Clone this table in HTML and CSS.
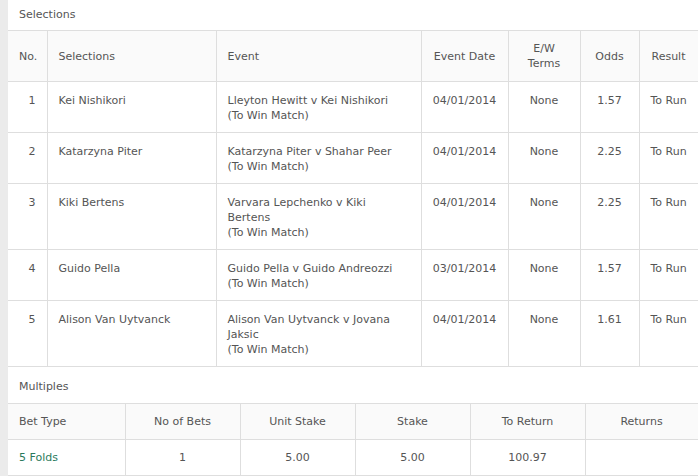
FILE: index.html
```html
<!DOCTYPE html>
<html>
<head>
<meta charset="utf-8">
<link rel="stylesheet" href="styles.css">
</head>
<body>
<div class="panel">
  <div class="section-title">Selections</div>
  <table class="grid selections">
    <colgroup>
      <col class="c-no"><col class="c-sel"><col class="c-ev"><col class="c-date"><col class="c-ew"><col class="c-odds"><col class="c-res">
    </colgroup>
    <thead>
      <tr>
        <th class="right">No.</th>
        <th>Selections</th>
        <th>Event</th>
        <th class="center">Event Date</th>
        <th class="center">E/W<br>Terms</th>
        <th class="center">Odds</th>
        <th class="center">Result</th>
      </tr>
    </thead>
    <tbody>
      <tr>
        <td class="right">1</td>
        <td>Kei Nishikori</td>
        <td>Lleyton Hewitt v Kei Nishikori<br>(To Win Match)</td>
        <td class="center">04/01/2014</td>
        <td class="center">None</td>
        <td class="center">1.57</td>
        <td class="center">To Run</td>
      </tr>
      <tr>
        <td class="right">2</td>
        <td>Katarzyna Piter</td>
        <td>Katarzyna Piter v Shahar Peer<br>(To Win Match)</td>
        <td class="center">04/01/2014</td>
        <td class="center">None</td>
        <td class="center">2.25</td>
        <td class="center">To Run</td>
      </tr>
      <tr>
        <td class="right">3</td>
        <td>Kiki Bertens</td>
        <td>Varvara Lepchenko v Kiki<br>Bertens<br>(To Win Match)</td>
        <td class="center">04/01/2014</td>
        <td class="center">None</td>
        <td class="center">2.25</td>
        <td class="center">To Run</td>
      </tr>
      <tr>
        <td class="right">4</td>
        <td>Guido Pella</td>
        <td>Guido Pella v Guido Andreozzi<br>(To Win Match)</td>
        <td class="center">03/01/2014</td>
        <td class="center">None</td>
        <td class="center">1.57</td>
        <td class="center">To Run</td>
      </tr>
      <tr>
        <td class="right">5</td>
        <td>Alison Van Uytvanck</td>
        <td>Alison Van Uytvanck v Jovana<br>Jaksic<br>(To Win Match)</td>
        <td class="center">04/01/2014</td>
        <td class="center">None</td>
        <td class="center">1.61</td>
        <td class="center">To Run</td>
      </tr>
    </tbody>
  </table>
  <div class="section-title multiples-title">Multiples</div>
  <table class="grid multiples">
    <colgroup>
      <col class="c-m1"><col class="c-m"><col class="c-m"><col class="c-m"><col class="c-m"><col class="c-m6">
    </colgroup>
    <thead>
      <tr>
        <th>Bet Type</th>
        <th class="center">No of Bets</th>
        <th class="center">Unit Stake</th>
        <th class="center">Stake</th>
        <th class="center">To Return</th>
        <th class="center">Returns</th>
      </tr>
    </thead>
    <tbody>
      <tr>
        <td class="bet-type">5 Folds</td>
        <td class="center">1</td>
        <td class="center">5.00</td>
        <td class="center">5.00</td>
        <td class="center">100.97</td>
        <td class="center"></td>
      </tr>
    </tbody>
  </table>
</div>
</body>
</html>
```
FILE: styles.css
```css
html, body {
  margin: 0;
  padding: 0;
}
body {
  background: #ebebeb;
  font-family: "DejaVu Sans", Verdana, sans-serif;
  font-size: 11px;
  line-height: 15px;
  color: #555;
}
.panel {
  margin-left: 8px;
  width: 690px;
  background: #fff;
  min-height: 476px;
}
.section-title {
  padding: 7px 11px 8px;
}
.multiples-title {
  padding: 12px 11px 9px;
}
.grid {
  width: 690px;
  border-collapse: collapse;
  table-layout: fixed;
}
.grid th,
.grid td {
  padding: 10px 11px;
  border: 1px solid #dedede;
  text-align: left;
  font-weight: normal;
  vertical-align: top;
  white-space: nowrap;
}
.selections td {
  padding-top: 11px;
  padding-bottom: 9px;
}
.grid tr > :first-child {
  border-left: none;
}
.grid th {
  background: #fafafa;
  vertical-align: middle;
}
.grid .center {
  text-align: center;
}
.grid .right {
  text-align: right;
}
.c-no { width: 39px; }
.c-sel { width: 169px; }
.c-ev { width: 205px; }
.c-date { width: 87px; }
.c-ew { width: 72px; }
.c-odds { width: 59px; }
.c-res { width: 59px; }
.c-m1 { width: 117px; }
.c-m { width: 115px; }
.c-m6 { width: 113px; }
.bet-type {
  color: #2b7a5c;
}
```
